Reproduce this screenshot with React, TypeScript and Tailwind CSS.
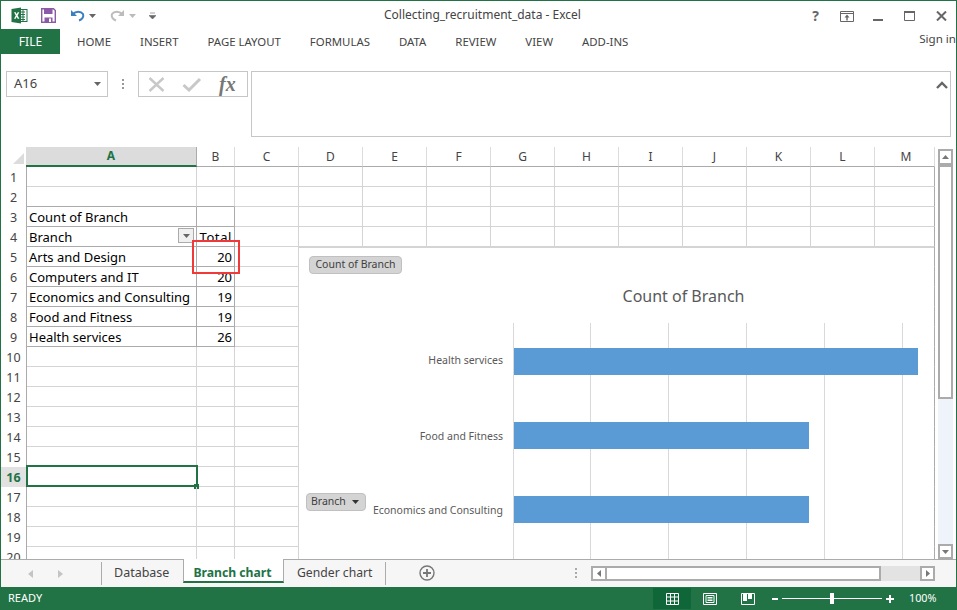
const font = "font-['Noto_Sans','Open_Sans',sans-serif]"

const columns = ['A', 'B', 'C', 'D', 'E', 'F', 'G', 'H', 'I', 'J', 'K', 'L', 'M']
const widths = ['w-[170px]', 'w-[38px]', 'w-[64px]', 'w-[64px]', 'w-[64px]', 'w-[64px]', 'w-[64px]', 'w-[64px]', 'w-[64px]', 'w-[64px]', 'w-[64px]', 'w-[64px]', 'w-[60px]']
const ribbonTabs = ['HOME', 'INSERT', 'PAGE LAYOUT', 'FORMULAS', 'DATA', 'REVIEW', 'VIEW', 'ADD-INS']

const pivot: Record<number, [string, string]> = {
  3: ['Count of Branch', ''],
  4: ['Branch', 'Total'],
  5: ['Arts and Design', '20'],
  6: ['Computers and IT', '20'],
  7: ['Economics and Consulting', '19'],
  8: ['Food and Fitness', '19'],
  9: ['Health services', '26'],
}

const bars = [
  { label: 'Health services', y: 348, w: 404, textY: 364 },
  { label: 'Food and Fitness', y: 422, w: 295, textY: 440 },
  { label: 'Economics and Consulting', y: 496, w: 295, textY: 514 },
]

function ExcelLogo() {
  return (
    <svg width="17" height="17" viewBox="0 0 17 17" className="shrink-0">
      <rect x="7" y="2.5" width="9" height="12" fill="#fff" stroke="#217346" />
      <path d="M10 5h4M10 7.500h4M10 10h4M10 12.500h4M12 3v11" stroke="#217346" strokeWidth="1" />
      <path d="M0.5 2 10 0.500v16L0.5 15z" fill="#217346" />
      <path d="M3 5.200h1.700l1 2 1-2h1.600L6.600 8.500l1.800 3.300H6.700l-1-2.100-1 2.100H3l1.800-3.300z" fill="#fff" />
    </svg>
  )
}

function SaveIcon() {
  return (
    <svg width="15" height="15" viewBox="0 0 15 15" className="shrink-0">
      <path d="M0.700 0.700h11.800l1.800 1.800v11.800H.7z" fill="#fff" stroke="#8a5aa8" strokeWidth="1.400" />
      <rect x="3" y="1" width="8.500" height="5" fill="#8a5aa8" />
      <rect x="3.500" y="9.500" width="8" height="5" fill="#8a5aa8" />
      <rect x="8" y="10.500" width="2" height="3.500" fill="#fff" />
    </svg>
  )
}

function UndoIcon({ color, flip }: { color: string; flip?: boolean }) {
  return (
    <svg width="15" height="13" viewBox="0 0 15 13" className={`shrink-0 ${flip ? '-scale-x-100' : ''}`}>
      <path d="M1 1v6h6z" fill={color} />
      <path d="M3 5c2.500-3 8-3 10 0 1 2.500-.5 5.500-4 6.500" fill="none" stroke={color} strokeWidth="2" />
    </svg>
  )
}

function Caret({ color = '#666', cls = '' }: { color?: string; cls?: string }) {
  return (
    <svg width="7" height="4" viewBox="0 0 7 4" className={`shrink-0 ${cls}`}>
      <path d="M0 0h7L3.500 4z" fill={color} />
    </svg>
  )
}

function ScrollButton({ d, cls }: { d: string; cls: string }) {
  return (
    <div className={`flex items-center justify-center border-2 border-[#ababab] bg-white ${cls}`}>
      <svg width="7" height="7" viewBox="0 0 7 7">
        <path d={d} fill="#777" />
      </svg>
    </div>
  )
}

function TitleBar() {
  return (
    <div className="h-[28px] flex items-center relative text-[#444]">
      <div className="w-[383px] pl-[10px] pt-px flex items-center shrink-0">
        <ExcelLogo />
        <div className="ml-[13px]"><SaveIcon /></div>
        <div className="ml-[14px]"><UndoIcon color="#3b7fc0" /></div>
        <Caret color="#666" cls="ml-[4px]" />
        <div className="ml-[14px]"><UndoIcon color="#bcbcbc" flip /></div>
        <Caret color="#bbb" cls="ml-[4px]" />
        <svg width="7" height="7" viewBox="0 0 7 7" className="ml-[13px] shrink-0">
          <path d="M1 1h5M0 3.500h7L3.500 7z" fill="#666" stroke="#666" strokeWidth="0.600" />
        </svg>
      </div>
      <div className="text-[12px] text-[#444] whitespace-nowrap">Collecting_recruitment_data - Excel</div>
      <div className="absolute right-[9px] top-[7px] flex items-center">
        <span className="text-[14px] font-bold leading-[16px] text-[#666] mr-[21px]">?</span>
        <svg width="14" height="11" viewBox="0 0 14 11" className="mr-[19px]">
          <path d="M.5.500h13v10H.5zM1 2.500h12" fill="none" stroke="#666" />
          <path d="M7 3.500 4.500 6.500h1.800v3h1.400v-3h1.800z" fill="#666" />
        </svg>
        <div className="w-[10px] h-[2px] bg-[#666] mt-[7px] mr-[21px]" />
        <svg width="11" height="10" viewBox="0 0 11 10" className="mr-[21px]">
          <path d="M.5.500h10v9H.5z" fill="none" stroke="#666" />
          <path d="M0 0h11v2H0z" fill="#666" />
        </svg>
        <svg width="11" height="10" viewBox="0 0 11 10">
          <path d="M1 .5l9 9M10 .5l-9 9" stroke="#666" strokeWidth="2" />
        </svg>
      </div>
    </div>
  )
}

function RibbonTabs() {
  return (
    <div className="h-[25px] flex items-center relative text-[11.400px]">
      <div className="w-[59px] h-full bg-[#217346] text-white flex items-center justify-center text-[12px] mr-[17px]">FILE</div>
      <div className="flex items-center gap-[29px] text-[#444] whitespace-nowrap">
        {ribbonTabs.map(t => <span key={t}>{t}</span>)}
      </div>
      <span className="absolute right-0 top-[1px] text-[11.600px] text-[#444]">Sign in</span>
    </div>
  )
}

function FormulaBar() {
  return (
    <div className="h-[93px] pt-[17px] pl-[5px] flex items-start">
      <div className="w-[102px] h-[26px] border border-[#c6c6c6] flex items-center justify-between pl-[7px] pr-[6px] text-[13px] text-[#444]">
        A16
        <Caret />
      </div>
      <div className="w-[30px] h-[26px] flex flex-col items-center justify-center gap-[2px]">
        <span className="w-[2px] h-[2px] bg-[#999]" />
        <span className="w-[2px] h-[2px] bg-[#999]" />
        <span className="w-[2px] h-[2px] bg-[#999]" />
      </div>
      <div className="w-[110px] h-[26px] border border-[#c6c6c6] flex items-center pl-[9px]">
        <svg width="17" height="15" viewBox="0 0 17 15">
          <path d="M1.500 1 15.500 14M15.500 1 1.500 14" stroke="#c8c8c8" strokeWidth="2.400" />
        </svg>
        <svg width="20" height="15" viewBox="0 0 20 15" className="ml-[17px]">
          <path d="M1.500 8 7 13 18 2" fill="none" stroke="#c8c8c8" strokeWidth="3" />
        </svg>
        <span className="ml-[17px] font-['Liberation_Serif',serif] italic font-bold text-[20px] leading-none text-[#777]">fx</span>
      </div>
      <div className="ml-[3px] w-[700px] h-[66px] border border-[#c6c6c6] flex justify-end pt-[9px] pr-[2px]">
        <svg width="12" height="8" viewBox="0 0 12 8">
          <path d="M1 7l5-5 5 5" fill="none" stroke="#666" strokeWidth="2.400" />
        </svg>
      </div>
    </div>
  )
}

function ChartObject() {
  return (
    <div className="absolute left-[298px] top-[99px] w-[635px] h-[313px] bg-white border-t-2 border-[#d4d4d4] overflow-hidden">
      <svg width="635" height="312" viewBox="299 248 635 312" className="block">
        {[513, 590, 668, 746, 824, 902].map(x => (
          <line key={x} x1={x + 0.5} x2={x + 0.5} y1="323" y2="560" stroke="#d9d9d9" />
        ))}
        {bars.map(b => (
          <g key={b.label}>
            <rect x="514" y={b.y} width={b.w} height="27" fill="#5b9bd5" />
            <text x="503" y={b.textY} textAnchor="end" fontSize="10.500" fill="#595959" fontFamily="Noto Sans">{b.label}</text>
          </g>
        ))}
        <text x="683.500" y="302" textAnchor="middle" fontSize="16" fill="#595959" fontFamily="Noto Sans">Count of Branch</text>
      </svg>
      <div className="absolute left-[10px] top-[8px] w-[93px] h-[18px] rounded-[4px] bg-[#d4d4d4] border border-[#c0c0c0] text-[10.500px] text-[#404040] flex items-center justify-center whitespace-nowrap">Count of Branch</div>
      <div className="absolute left-[7px] top-[245px] w-[60px] h-[18px] rounded-[4px] bg-[#d4d4d4] border border-[#c0c0c0] text-[10.500px] text-[#404040] flex items-center pl-[4px] gap-[6px]">
        Branch
        <Caret color="#333" />
      </div>
    </div>
  )
}

function Sheet() {
  const rows = Array.from({ length: 20 }, (_, i) => i + 1)
  return (
    <div className="relative w-[934px] h-[412px] overflow-hidden">
      <div className="flex h-[20px] text-[12px] text-[#444]">
        <div className="w-[25px] h-full shrink-0 relative">
          <div className="absolute right-[2px] bottom-[3px] w-0 h-0 border-l-[11px] border-l-transparent border-b-[11px] border-b-[#dcdcdc]" />
        </div>
        <div className="w-[171px] shrink-0 flex items-center justify-center bg-[#dcdcdc] text-[#217346] font-bold border-b-2 border-[#217346] border-r border-r-[#ababab]">A</div>
        {columns.slice(1).map((c, i) => (
          <div key={c} className={`${widths[i + 1]} shrink-0 flex items-center justify-center border-b border-b-[#ababab] border-r border-r-[#dcdcdc] ${c === 'M' ? 'pl-[3px]' : ''}`}>{c}</div>
        ))}
      </div>
      {rows.map(r => {
        const p = pivot[r]
        const inPivot = !!p
        const line = inPivot || r === 2 ? 'border-b-[#ababab]' : 'border-b-[#d4d4d4]'
        const side = inPivot ? 'border-r-[#ababab]' : 'border-r-[#d4d4d4]'
        return (
          <div key={r} className="flex h-[20px] text-[13px] leading-[21px] text-black">
            <div className={`w-[26px] shrink-0 text-center border-r border-[#ababab] text-[12.500px] ${r === 16 ? 'bg-[#e1e1e1] font-bold text-[#217346]' : 'text-[#444]'}`}>{r}</div>
            <div className={`w-[170px] shrink-0 pl-[2px] relative border-b border-r whitespace-nowrap ${line} ${side}`}>
              {p ? p[0] : ''}
              {r === 4 && (
                <div className="absolute right-[2px] top-[1px] w-[16px] h-[15px] border border-[#ababab] bg-[#f0f0f0] flex items-center justify-center">
                  <Caret />
                </div>
              )}
              {r === 16 && (
                <div className="absolute -left-px -top-[2px] w-[172px] h-[22px] border-2 border-[#217346]">
                  <div className="absolute -right-[3px] -bottom-[4px] w-[5px] h-[5px] bg-[#217346]" />
                </div>
              )}
            </div>
            <div className={`w-[38px] shrink-0 pr-[2px] text-right border-b border-r ${line} ${side} ${r === 4 ? 'tracking-[0.6px]' : ''}`}>{p ? p[1] : ''}</div>
            {columns.slice(2).map((c, i) => (
              <div key={c} className={`${widths[i + 2]} shrink-0 border-b border-r border-b-[#d4d4d4] ${c === 'M' ? 'border-r-[#ababab]' : 'border-r-[#d4d4d4]'}`} />
            ))}
          </div>
        )
      })}
      <ChartObject />
      <div className="absolute left-[191px] top-[93px] w-[48px] h-[34px] border-2 border-[#f03a3a]" />
    </div>
  )
}

function VerticalScroll() {
  return (
    <div className="w-[15px] ml-[3px] mt-[2px] h-[410px] flex flex-col">
      <ScrollButton d="M3.500 1 7 5H0z" cls="h-[16px] shrink-0" />
      <div className="h-[234px] shrink-0 bg-white border-2 border-[#ababab]" />
      <div className="flex-1 bg-[#eff3fa]" />
      <ScrollButton d="M0 2h7L3.500 6z" cls="h-[15px] shrink-0" />
    </div>
  )
}

function TabBar() {
  return (
    <div className="h-[28px] bg-[#f6f6f6] border-t border-[#ababab] flex relative text-[12.500px]">
      <div className="w-[100px] flex items-center pl-[27px] gap-[25px]">
        <svg width="5" height="8" viewBox="0 0 5 8"><path d="M5 0v8L0 4z" fill="#c4c4c4" /></svg>
        <svg width="5" height="8" viewBox="0 0 5 8"><path d="M0 0v8l5-4z" fill="#c4c4c4" /></svg>
      </div>
      <div className="w-[82px] h-[23px] mt-[2px] border-l border-[#ababab] flex items-center pl-[12px] text-[#444]">Database</div>
      <div className="w-[101px] h-[24px] -mt-px border-x border-[#ababab] border-b-2 border-b-[#217346] bg-white flex items-center justify-center pt-[6px] pr-[2px] text-[12.200px] font-bold text-[#217346] whitespace-nowrap">Branch chart</div>
      <div className="w-[102px] h-[23px] mt-[2px] border-r border-[#ababab] flex items-center pl-[13px] text-[12.200px] text-[#444] whitespace-nowrap">Gender chart</div>
      <svg width="16" height="16" viewBox="0 0 16 16" className="ml-[33px] mt-[5px]">
        <circle cx="8" cy="8" r="7" fill="none" stroke="#777" strokeWidth="1.400" />
        <path d="M4 8h8M8 4v8" stroke="#777" strokeWidth="1.800" />
      </svg>
      <div className="ml-[140px] mt-[8px] flex flex-col gap-[2px] w-[2px] h-[10px]">
        <span className="w-[2px] h-[2px] bg-[#aaa]" />
        <span className="w-[2px] h-[2px] bg-[#aaa]" />
        <span className="w-[2px] h-[2px] bg-[#aaa]" />
      </div>
      <div className="ml-[14px] mt-[6px] w-[344px] h-[15px] flex bg-[#e3e3e3]">
        <ScrollButton d="M5 0v7L1 3.500z" cls="w-[16px] h-full shrink-0" />
        <div className="w-[274px] h-full bg-white border-y-2 border-r-2 border-[#ababab]" />
        <div className="flex-1" />
        <ScrollButton d="M2 0v7l4-3.500z" cls="w-[15px] h-full shrink-0" />
      </div>
    </div>
  )
}

function StatusBar() {
  return (
    <div className="h-[23px] bg-[#217346] -mx-px text-white text-[11px] flex items-center pl-[8px]">
      <span className="w-[645px]">READY</span>
      <div className="w-[38px] h-[21px] bg-[#0f6638] flex items-center justify-center">
        <svg width="13" height="12" viewBox="0 0 13 12">
          <path d="M.5.500h12v11H.5zM4.500.500v11M8.500.500v11M.5 4h12M.5 8h12" fill="none" stroke="#fff" />
        </svg>
      </div>
      <div className="w-[38px] flex justify-center">
        <svg width="14" height="12" viewBox="0 0 14 12">
          <path d="M.5.500h13v11H.5zM3 2.500h8v7H3zM4.500 4.500h5M4.500 6h5M4.500 7.500h5" fill="none" stroke="#fff" />
        </svg>
      </div>
      <div className="w-[38px] flex justify-center">
        <svg width="14" height="12" viewBox="0 0 14 12">
          <path d="M.5.500h13v11H.5z" fill="none" stroke="#fff" />
          <path d="M2 1h4v7H2zM7 1h4v5H7z" fill="#fff" />
        </svg>
      </div>
      <div className="ml-[5px] w-[6px] h-[2px] bg-white" />
      <div className="ml-[4px] w-[100px] h-px bg-white relative">
        <div className="absolute left-[48px] -top-[5px] w-[4px] h-[11px] bg-white" />
      </div>
      <svg width="8" height="8" viewBox="0 0 8 8" className="ml-[4px]">
        <path d="M0 4h8M4 0v8" stroke="#fff" strokeWidth="2" />
      </svg>
      <span className="ml-[15px] text-[10.800px]">100%</span>
    </div>
  )
}

export default function App() {
  return (
    <div className={`w-[957px] h-[610px] overflow-hidden border-x border-t border-[#217346] bg-white flex flex-col ${font}`}>
      <TitleBar />
      <RibbonTabs />
      <FormulaBar />
      <div className="flex h-[412px]">
        <Sheet />
        <VerticalScroll />
      </div>
      <TabBar />
      <StatusBar />
    </div>
  )
}
